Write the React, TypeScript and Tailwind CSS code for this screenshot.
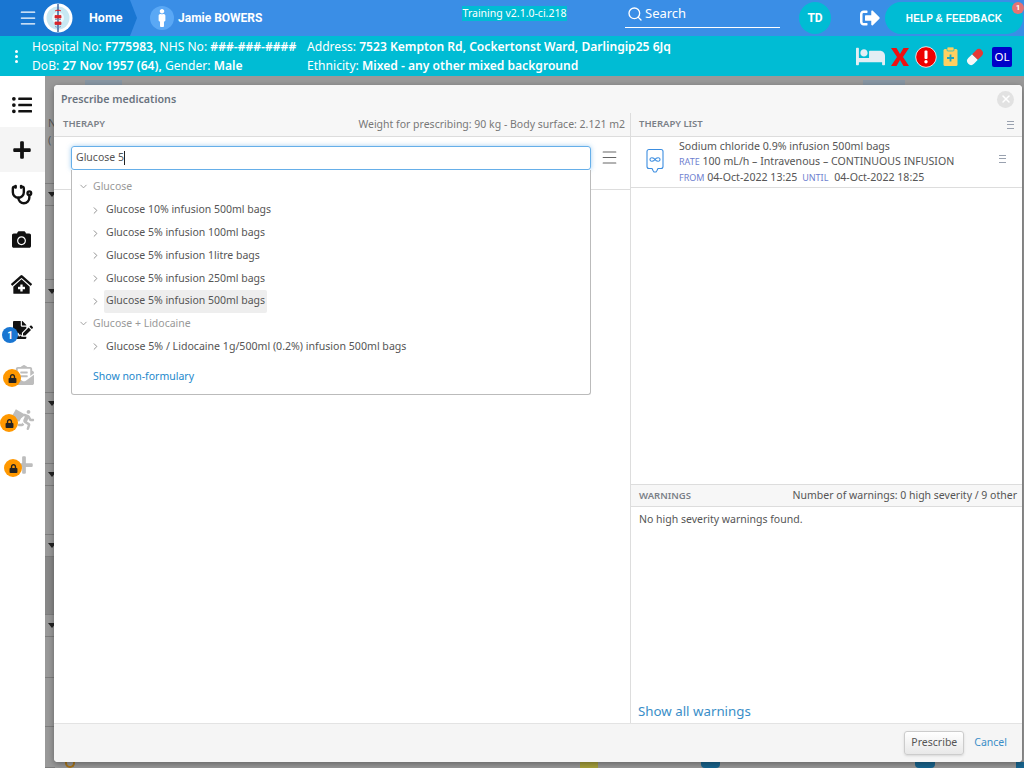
import {
  FaBed,
  FaCamera,
  FaClinicMedical,
  FaEnvelopeOpenText,
  FaFileSignature,
  FaListUl,
  FaLock,
  FaMale,
  FaPlus,
  FaRunning,
  FaSignOutAlt,
} from "react-icons/fa";
import { ChevronDown, ChevronRight, Menu, Search, Stethoscope, X } from "lucide-react";

const backdropRows = [
  { h: 108 },
  { h: 22, caret: true },
  { h: 74 },
  { h: 23, caret: true },
  { h: 90 },
  { h: 21, caret: true },
  { h: 50 },
  { h: 22, caret: true },
  { h: 49 },
  { h: 22, caret: true },
  { h: 58, dark: true },
  { h: 22, caret: true },
  { h: 41 },
  { h: 49 },
  { h: 41 },
];

const glucose = [
  "Glucose 10% infusion 500ml bags",
  "Glucose 5% infusion 100ml bags",
  "Glucose 5% infusion 1litre bags",
  "Glucose 5% infusion 250ml bags",
  "Glucose 5% infusion 500ml bags",
];

function Logo() {
  return (
    <svg width="30" height="30" viewBox="0 0 30 30">
      <circle cx="15" cy="15" r="14.5" fill="#fff" />
      <circle cx="15" cy="15" r="11.5" fill="#c8e8f2" />
      <circle cx="15" cy="15" r="6" fill="#eef8fb" />
      <path d="M15 1v28" stroke="#27508f" strokeWidth="1.3" />
      <path d="M12 8c2-1.500 5-1 6 0M12 12.500h6v2.500h-6zM12 19h6v2.500h-6z" fill="#d8262c" stroke="#d8262c" strokeWidth="0.8" />
      <path d="M12 16.500h6M12 23.500c2 1 4 1 6 0" stroke="#6f8fb8" strokeWidth="0.8" fill="none" />
    </svg>
  );
}

function RowMenu({ className }: { className: string }) {
  return (
    <div className={`flex flex-col justify-between ${className}`}>
      <span className="h-px bg-gray-400" />
      <span className="h-px bg-gray-400" />
      <span className="h-px bg-gray-400" />
    </div>
  );
}

function LockBadge({ className }: { className: string }) {
  return (
    <span className={`absolute w-[18px] h-[18px] rounded-full bg-[#ff9800] flex items-center justify-center ${className}`}>
      <FaLock className="text-[#222] text-[9px]" />
    </span>
  );
}

function TopBar() {
  return (
    <header className="h-9 bg-[#3a8ee6] text-white flex items-center relative font-['Roboto',sans-serif]">
      <div className="h-9 w-[137px] shrink-0 bg-[#1976d2] [clip-path:polygon(0_0,130px_0,137px_18px,130px_36px,0_36px)] flex items-center">
        <Menu size={20} strokeWidth={1.5} className="ml-[18px]" />
        <div className="ml-[5px]">
          <Logo />
        </div>
        <span className="ml-4 text-[12.5px] font-bold">Home</span>
      </div>
      <div className="ml-[13px] w-6 h-6 rounded-full bg-[#5aa8f5] flex items-center justify-center">
        <FaMale className="text-[18px]" />
      </div>
      <span className="ml-1 text-[12px] font-bold w-[284px]">Jamie BOWERS</span>
      <div className="w-[105px] h-[15px] mb-[9px] bg-[#00bcd4] font-['Noto_Sans',sans-serif] text-[10.5px] leading-[15px] text-center whitespace-nowrap">
        Training v2.1.0-ci.218
      </div>
      <div className="ml-[58px] w-[155px] h-[28px] self-start border-b border-white flex items-center font-['Noto_Sans',sans-serif] text-[13px]">
        <Search size={16} strokeWidth={2} className="mx-[2px]" />
        Search
      </div>
      <div className="ml-[19px] w-8 h-8 rounded-full bg-[#00bcd4] flex items-center justify-center text-[12px] font-bold">TD</div>
      <FaSignOutAlt className="ml-[29px] text-[20px]" />
      <div className="ml-[5px] w-[138px] h-8 rounded-full bg-[#00bcd4] flex items-center justify-center text-[10px] font-bold tracking-[0.1px] font-['Liberation_Sans',sans-serif]">
        HELP &amp; FEEDBACK
      </div>
      <span className="absolute right-0 top-[2px] w-3 h-3 rounded-full bg-[#e57373] text-[8px] font-bold flex items-center justify-center">1</span>
    </header>
  );
}

function PatientBar() {
  return (
    <div className="h-10 bg-[#00bcd4] text-white flex items-center font-['Noto_Sans',sans-serif] text-[12.1px] leading-[19px] whitespace-nowrap">
      <div className="w-8 shrink-0 flex flex-col items-center gap-[2px]">
        <span className="w-[3px] h-[3px] rounded-full bg-white" />
        <span className="w-[3px] h-[3px] rounded-full bg-white" />
        <span className="w-[3px] h-[3px] rounded-full bg-white" />
      </div>
      <div className="w-[275px] shrink-0">
        <div>
          Hospital No: <b className="font-semibold">F775983,</b> NHS No: <b className="font-semibold">###-###-####</b>
        </div>
        <div>
          DoB: <b className="font-semibold">27 Nov 1957 (64),</b> Gender: <b className="font-semibold">Male</b>
        </div>
      </div>
      <div className="flex-1">
        <div>
          Address: <b className="font-semibold">7523 Kempton Rd, Cockertonst Ward, Darlingip25 6Jq</b>
        </div>
        <div>
          Ethnicity: <b className="font-semibold">Mixed - any other mixed background</b>
        </div>
      </div>
      <div className="flex items-center mr-[12px] mt-[1px]">
        <FaBed className="text-[#e3eef4] text-[29px]" />
        <svg width="20" height="20" viewBox="0 0 20 20" className="ml-[5px]">
          <path d="M1 1h5.5L10 7l3.5-6H19l-6 9 6 9h-5.5L10 13l-3.500 6H1l6-9z" fill="#ee1111" />
        </svg>
        <svg width="22" height="22" viewBox="0 0 22 22" className="ml-[5px]">
          <circle cx="11" cy="11" r="10.300" fill="#ee0000" stroke="#fff" strokeWidth="0.8" />
          <rect x="9.500" y="4.500" width="3" height="8.500" rx="1" fill="#fff" />
          <circle cx="11" cy="15.800" r="1.700" fill="#fff" />
        </svg>
        <svg width="15" height="19" viewBox="0 0 15 19" className="ml-[6px]">
          <rect x="0.500" y="2" width="14" height="17" rx="1.500" fill="#ffd060" />
          <rect x="4" y="0" width="7" height="4" rx="1" fill="#ffd060" stroke="#00bcd4" strokeWidth="0.7" />
          <path d="M7.500 7.500v7M4 11h7" stroke="#1ca7c4" strokeWidth="1.800" />
        </svg>
        <svg width="20" height="20" viewBox="0 0 20 20" className="ml-[7px]">
          <g transform="rotate(-45 10 10)">
            <path d="M10 6H4.500a4 4 0 0 0 0 8H10z" fill="#f7f7f7" />
            <path d="M10 6h5.500a4 4 0 0 1 0 8H10z" fill="#e53935" />
          </g>
        </svg>
        <div className="ml-[7px] w-5 h-5 rounded-[2px] bg-[#0000c8] text-[11.5px] leading-5 text-center">OL</div>
      </div>
    </div>
  );
}

function Sidebar() {
  return (
    <aside className="w-[45px] shrink-0 bg-white flex flex-col text-[#111] text-[20px]">
      <div className="h-[51px] flex items-center justify-center pt-[7px] pr-[2px]">
        <FaListUl />
      </div>
      <div className="h-[45px] bg-[#f5f5f5] flex items-center justify-center pr-[2px]">
        <FaPlus />
      </div>
      <div className="h-[45px] flex items-center justify-center pr-[2px]">
        <Stethoscope size={22} strokeWidth={2.6} />
      </div>
      <div className="h-[45px] flex items-center justify-center pr-[2px]">
        <FaCamera className="text-[19px]" />
      </div>
      <div className="h-[45px] flex items-center justify-center pr-[2px]">
        <FaClinicMedical className="text-[21px]" />
      </div>
      <div className="h-[45px] relative flex items-center justify-center">
        <FaFileSignature />
        <span className="absolute left-[2px] top-[20px] w-4 h-4 rounded-full bg-[#1976d2] text-white text-[10px] font-bold font-['Roboto',sans-serif] flex items-center justify-center">1</span>
      </div>
      <div className="h-[45px] relative flex items-center justify-center text-[#bdbdbd]">
        <FaEnvelopeOpenText className="ml-[2px]" />
        <LockBadge className="left-[3px] top-[17px]" />
      </div>
      <div className="h-[45px] relative flex items-center justify-center text-[#bdbdbd]">
        <span className="absolute left-[13px] top-[14px] w-[9px] h-[9px] bg-[#bdbdbd] rotate-[30deg]" />
        <FaRunning className="ml-[6px] relative" />
        <LockBadge className="left-0 top-[17px]" />
      </div>
      <div className="h-[45px] relative flex items-center justify-center text-[#bdbdbd]">
        <FaPlus className="ml-[2px]" />
        <LockBadge className="left-[4px] top-[17px]" />
      </div>
    </aside>
  );
}

function Backdrop() {
  return (
    <div className="flex-1 bg-[#999] relative overflow-hidden">
      <div className="w-[10px]">
        {backdropRows.map((r, i) => (
          <div
            key={i}
            style={{ height: r.h }}
            className={`border-b border-[#7d7d7d] flex items-center ${r.dark ? "bg-[#878787]" : ""}`}
          >
            {r.caret ? <span className="ml-[3px] border-x-[4px] border-x-transparent border-t-[5px] border-t-[#222]" /> : null}
            {i === 0 ? (
              <div className="pl-[3px] pt-[2px] font-['Noto_Sans',sans-serif] text-[11px] leading-[17px] text-[#555]">
                N<br />(
              </div>
            ) : null}
          </div>
        ))}
      </div>
      <div className="absolute left-[40px] top-[4px] h-[5px] w-[37px] bg-[#8796a3]" />
      <div className="absolute left-[818px] top-[4px] h-[5px] w-[42px] bg-[#8796a3]" />
      <div className="absolute left-[20px] bottom-0 w-[10px] h-[6px] rounded-b-full border-x-2 border-b-2 border-[#a9761c]" />
      <div className="absolute left-[535px] bottom-0 w-[18px] h-[6px] bg-[#a8a23c]" />
      <div className="absolute left-[656px] bottom-0 w-[19px] h-[6px] rounded-b bg-[#18658f]" />
      <div className="absolute left-[870px] bottom-0 w-[20px] h-[6px] rounded-b bg-[#18658f]" />
      <div className="absolute right-0 bottom-0 w-[8px] h-[6px] bg-[#18658f]" />
    </div>
  );
}

function TherapyPane() {
  return (
    <section className="w-[577px] shrink-0 border-r border-[#ddd] flex flex-col relative">
      <div className="h-[24px] bg-[#f7f7f7] border-b border-[#ddd] flex items-center justify-between pl-[9px] pr-[5px] text-[10.5px] text-[#777]">
        <span className="font-semibold text-[#7a8087] text-[9.5px]">THERAPY</span>
        <span>Weight for prescribing: 90 kg - Body surface: 2.121 m2</span>
      </div>
      <div className="h-[53px] border-b border-[#ddd] flex items-start pt-[9px] pl-[17px]">
        <div className="w-[520px] h-[24px] rounded-[3px] border border-[#66afe9] shadow-[0_0_5px_rgba(102,175,233,0.6)] flex items-center pl-[4px] text-[#555]">
          Glucose 5<span className="w-px h-[14px] bg-[#222]" />
        </div>
        <Menu size={19} strokeWidth={1.3} className="ml-[9px] mt-[2px] text-[#666]" />
      </div>
      <div className="absolute left-[17px] top-[57px] w-[520px] h-[225px] bg-white border border-[#bbb] border-t-0 rounded-b-[3px] text-[#555] pt-[5px]">
        <div className="h-[24px] pb-[1px] flex items-center pl-[6px] text-[#999]">
          <ChevronDown size={11} className="text-[#999] mr-[4px]" />
          Glucose
        </div>
        {glucose.map((g, i) => (
          <div key={g} className="h-[22.7px] flex items-center pl-[18px]">
            <ChevronRight size={11} className="text-[#888] mr-[3px]" />
            <span className={`px-[2px] h-[23px] flex items-center rounded-[2px] ${i === 4 ? "bg-[#eee]" : ""}`}>{g}</span>
          </div>
        ))}
        <div className="h-[23px] flex items-center pl-[6px] text-[#999]">
          <ChevronDown size={11} className="text-[#999] mr-[4px]" />
          Glucose + Lidocaine
        </div>
        <div className="h-[23px] flex items-center pl-[18px]">
          <ChevronRight size={11} className="text-[#888] mr-[3px]" />
          <span className="px-[2px] text-[10.6px]">Glucose 5% / Lidocaine 1g/500ml (0.2%) infusion 500ml bags</span>
        </div>
        <div className="mt-[11px] pl-[21px] text-[#1c88cc]">Show non-formulary</div>
      </div>
    </section>
  );
}

function TherapyList() {
  return (
    <section className="flex-1 flex flex-col min-w-0">
      <div className="h-[24px] bg-[#f7f7f7] border-b border-[#ddd] flex items-center justify-between pl-[8px] pr-[8px] text-[9.5px] font-semibold text-[#7a8087]">
        THERAPY LIST
        <RowMenu className="w-[7px] h-[8px]" />
      </div>
      <div className="h-[51px] border-b border-[#ddd] flex items-center text-[10.6px] leading-[15.5px] text-[#555]">
        <svg width="18" height="26" viewBox="0 0 18 26" className="ml-[15px] mr-[15px] mb-[2px]" fill="none" stroke="#3b8de0" strokeWidth="1.1">
          <path d="M3 1.500h12a2 2 0 0 1 2 2v15a2 2 0 0 1-2 2h-3l-1 2-1 1.500H8l-1-1.500-1-2H3a2 2 0 0 1-2-2v-15a2 2 0 0 1 2-2z" />
          <path d="M9 11.500c-1.300-2-5-2.500-5 0s3.700 2 5 0 5-2.500 5 0-3.700 2-5 0z" />
        </svg>
        <div className="flex-1 whitespace-nowrap">
          <div>Sodium chloride 0.9% infusion 500ml bags</div>
          <div>
            <span className="text-[#6f7fd0] text-[9px]">RATE</span> 100 mL/h – Intravenous – CONTINUOUS INFUSION
          </div>
          <div>
            <span className="text-[#6f7fd0] text-[9px]">FROM</span> 04-Oct-2022 13:25 <span className="text-[#6f7fd0] text-[9px] ml-[2px]">UNTIL</span> <span className="ml-[3px]">04-Oct-2022 18:25</span>
          </div>
        </div>
        <RowMenu className="w-[7px] h-[8px] mr-[16px] mb-[7px]" />
      </div>
      <div className="flex-1" />
      <div className="h-[23px] pt-[1px] bg-[#f7f7f7] border-y border-[#ddd] flex items-center justify-between pl-[8px] pr-[5px] text-[10.5px] text-[#555]">
        <span className="font-semibold text-[#7a8087] text-[9.5px]">WARNINGS</span>
        <span>Number of warnings: 0 high severity / 9 other</span>
      </div>
      <div className="h-[216px] relative pl-[8px] pt-[5px] text-[10.5px] text-[#555]">
        No high severity warnings found.
        <div className="absolute left-[7px] bottom-[1px] text-[13.3px] text-[#3a8ec8]">Show all warnings</div>
      </div>
    </section>
  );
}

function PrescribeModal() {
  return (
    <div className="absolute left-[54px] top-[85px] w-[968px] h-[677px] bg-white rounded-[4px] shadow-[0_2px_6px_rgba(0,0,0,0.35)] flex flex-col overflow-hidden font-['Noto_Sans',sans-serif] text-[10.5px]">
      <div className="h-[28px] shrink-0 bg-[#f7f7f7] flex items-center justify-between pl-[7px] pr-[8px]">
        <span className="font-semibold text-[#6a7480] text-[10.7px] mt-[1px]">Prescribe medications</span>
        <span className="w-[17px] h-[17px] rounded-full bg-[#e2e2e2] flex items-center justify-center">
          <X size={12} strokeWidth={3} className="text-white" />
        </span>
      </div>
      <div className="flex-1 flex min-h-0">
        <TherapyPane />
        <TherapyList />
      </div>
      <div className="h-[39px] shrink-0 bg-[#f5f5f5] border-t border-[#e3e3e3] flex items-center justify-end pr-[15px]">
        <button className="w-[60px] h-[24px] rounded-[3px] border border-[#ccc] bg-gradient-to-b from-white to-[#e8e8e8] shadow-sm text-[#555] text-[10.5px]">Prescribe</button>
        <span className="ml-[10px] text-[#3a8ec8]">Cancel</span>
      </div>
    </div>
  );
}

export default function App() {
  return (
    <div className="w-[1024px] h-[768px] relative overflow-hidden bg-white">
      <TopBar />
      <PatientBar />
      <div className="flex h-[692px]">
        <Sidebar />
        <Backdrop />
      </div>
      <PrescribeModal />
    </div>
  );
}
